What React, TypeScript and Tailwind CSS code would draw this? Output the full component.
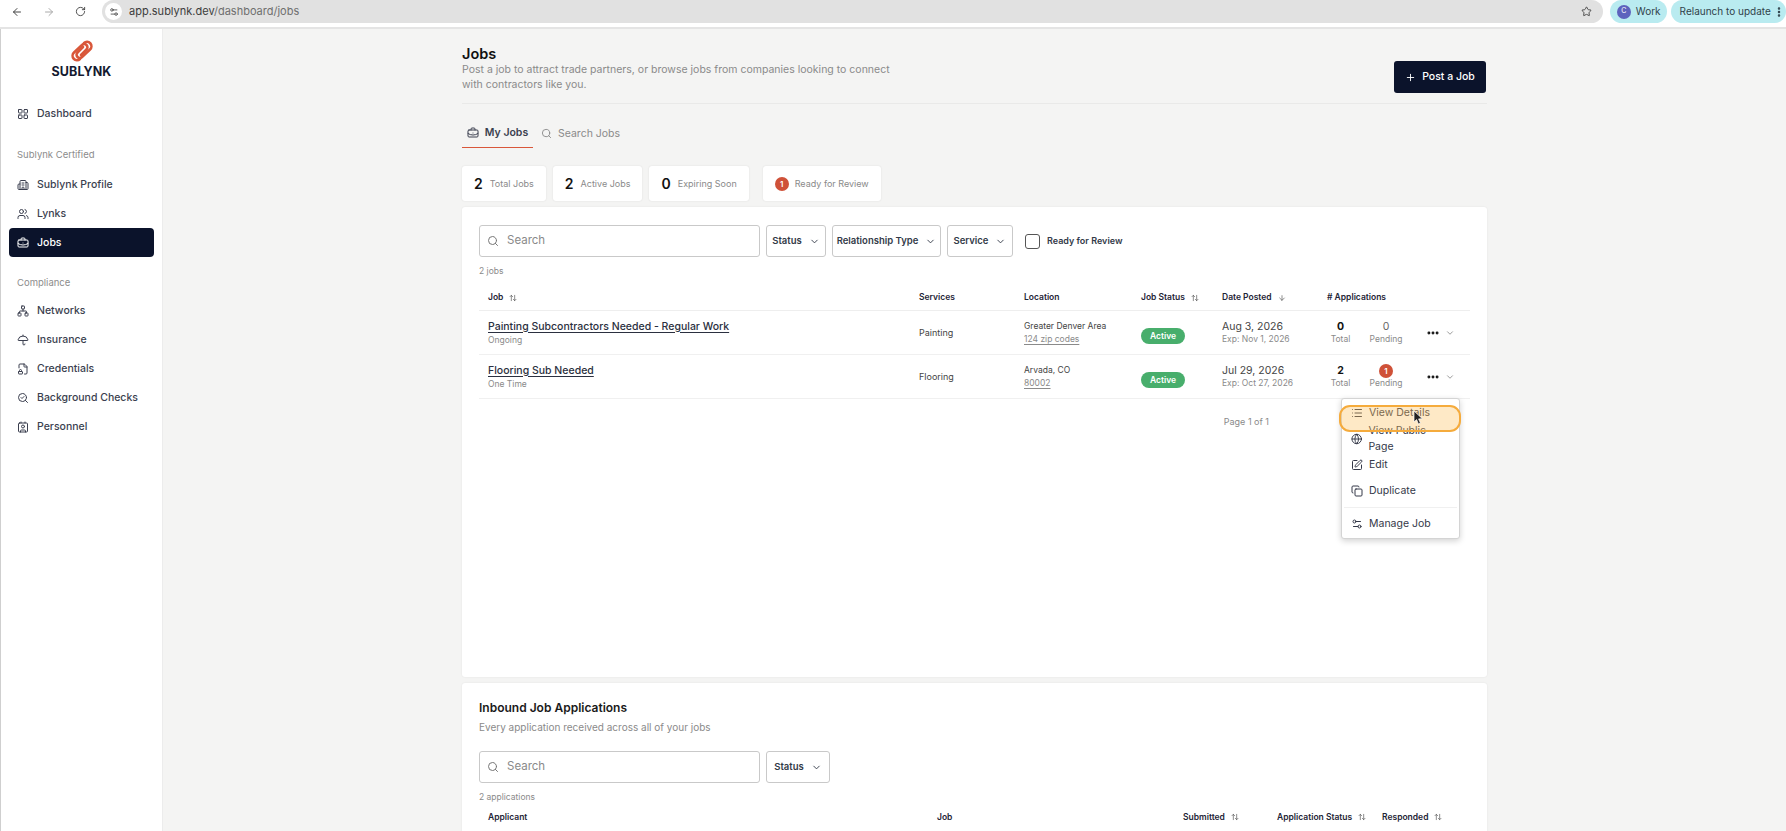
import {
  ArrowDown,
  ArrowLeft,
  ArrowRight,
  ArrowUpDown,
  BriefcaseBusiness,
  Building2,
  ChevronDown,
  Contact,
  Copy,
  EllipsisVertical,
  Ellipsis,
  FileLock2,
  Globe,
  LayoutGrid,
  List,
  Network,
  Plus,
  RotateCw,
  Search,
  SearchCheck,
  Settings2,
  SquarePen,
  Star,
  Umbrella,
  Users,
} from "lucide-react";
import type { ReactNode } from "react";

const gridCols = "grid grid-cols-[431px_105px_117px_81px_105px_45px_46px_60px]";

function NavItem({ icon, label, active }: { icon: ReactNode; label: string; active?: boolean }) {
  return (
    <div
      className={
        active
          ? "mx-[8px] flex h-[29px] items-center gap-[8px] rounded-[4px] bg-[#0b132b] px-[8px] text-white"
          : "mx-[8px] flex h-[29px] items-center gap-[8px] px-[8px] text-[#3b3f4f]"
      }
    >
      {icon}
      <span className="text-[10.5px] font-medium">{label}</span>
    </div>
  );
}

function Sidebar() {
  const ic = "h-[12px] w-[12px]";
  return (
    <aside className="flex w-[163px] shrink-0 flex-col border-r border-l border-r-[#ececec] border-l-[#cfcfcf] bg-white">
      <div className="flex flex-col items-center pt-[11px]">
        <svg width="26" height="22" viewBox="0 0 26 22" fill="none" stroke="#d9573a" strokeWidth="2.6" strokeLinecap="round">
          <path d="M12 15 L17.5 9.5 A3 3 0 0 0 13 5 L5 12.5 A4 4 0 0 0 11 19" />
          <path d="M14 7 L8.5 12.5 A3 3 0 0 0 13 17 L21 9.5 A4 4 0 0 0 15 3" />
        </svg>
        <div className="mt-[3px] text-[12.5px] leading-[14px] font-bold tracking-[0.1px] text-[#141a30]">SUBLYNK</div>
      </div>
      <div className="mt-[20px]">
        <NavItem icon={<LayoutGrid className={ic} />} label="Dashboard" />
      </div>
      <div className="mt-[20px] mb-[8px] px-[16px] text-[9.5px] text-[#8c8c8c]">Sublynk Certified</div>
      <NavItem icon={<Building2 className={ic} />} label="Sublynk Profile" />
      <NavItem icon={<Users className={ic} />} label="Lynks" />
      <NavItem icon={<BriefcaseBusiness className={ic} />} label="Jobs" active />
      <div className="mt-[19px] mb-[6px] px-[16px] text-[9.5px] text-[#8c8c8c]">Compliance</div>
      <NavItem icon={<Network className={ic} />} label="Networks" />
      <NavItem icon={<Umbrella className={ic} />} label="Insurance" />
      <NavItem icon={<FileLock2 className={ic} />} label="Credentials" />
      <NavItem icon={<SearchCheck className={ic} />} label="Background Checks" />
      <NavItem icon={<Contact className={ic} />} label="Personnel" />
    </aside>
  );
}

function BrowserBar() {
  return (
    <div className="flex h-[29px] shrink-0 items-start border-b-[2px] border-[#e4e4e4] bg-white pl-[11px]">
      <div className="flex h-[23px] items-center gap-[20px] text-[#444]">
        <ArrowLeft className="h-[12px] w-[12px]" />
        <ArrowRight className="h-[12px] w-[12px] text-[#aaa]" />
        <RotateCw className="h-[11px] w-[11px]" />
      </div>
      <div className="ml-[16px] flex h-[23px] w-[1509px] items-center rounded-r-full rounded-l-full bg-[#e1e1e1] pr-[11px] pl-[3px]">
        <div className="flex h-[17px] w-[17px] items-center justify-center rounded-full bg-white">
          <Settings2 className="h-[10px] w-[10px] text-[#444]" />
        </div>
        <div className="ml-[7px] flex-1 text-[11px] text-[#3c3c3c]">
          app.sublynk.dev<span className="text-[#6f6f6f]">/dashboard/jobs</span>
        </div>
        <Star className="h-[11px] w-[11px] text-[#444]" />
      </div>
      <div className="ml-[7px] flex h-[23px] w-[57px] items-center rounded-full bg-[#b9ebf0] pl-[7px]">
        <div className="flex h-[14px] w-[14px] items-center justify-center rounded-full bg-[#5d62bd] text-[7px] text-white">C</div>
        <span className="ml-[5px] text-[10px] text-[#30424a]">Work</span>
      </div>
      <div className="ml-[4px] flex h-[23px] w-[116px] items-center rounded-full bg-[#b9ebf0] pl-[9px] text-[10px] text-[#30424a]">
        Relaunch to update
        <EllipsisVertical className="ml-[2px] h-[12px] w-[12px]" strokeWidth={3} />
      </div>
    </div>
  );
}

function Stat({ value, label }: { value: string; label: string }) {
  return (
    <div className="flex h-[35px] items-center gap-[7px] rounded-[3px] bg-white px-[12px] shadow-[0_0_2px_rgba(0,0,0,0.1)]">
      <span className="text-[14px] font-semibold text-[#111]">{value}</span>
      <span className="text-[9px] text-[#8a8a8a]">{label}</span>
    </div>
  );
}

function FilterSelect({ label, width }: { label: string; width: string }) {
  return (
    <div className={`flex h-[32px] items-center justify-center gap-[7px] rounded-[3px] border border-[#c9c9c9] bg-white ${width}`}>
      <span className="text-[9.5px] font-semibold text-[#333a48]">{label}</span>
      <ChevronDown className="h-[11px] w-[11px] text-[#333a48]" />
    </div>
  );
}

function SearchBox() {
  return (
    <div className="flex h-[32px] w-[281px] items-center gap-[8px] rounded-[3px] border border-[#c9c9c9] bg-white px-[7px]">
      <Search className="h-[12px] w-[12px] text-[#777]" />
      <span className="text-[11.5px] text-[#8a8a8a]">Search</span>
    </div>
  );
}

function HeadCell({ label, sort }: { label: string; sort?: "both" | "down" }) {
  return (
    <div className="flex items-center gap-[6px] pl-[9px] text-[8.5px] font-semibold whitespace-nowrap text-[#1e2436]">
      {label}
      {sort === "both" && <ArrowUpDown className="h-[8px] w-[8px] text-[#555]" />}
      {sort === "down" && <ArrowDown className="h-[8px] w-[8px] text-[#555]" />}
    </div>
  );
}

type Job = {
  title: string;
  kind: string;
  service: string;
  place: string;
  area: string;
  posted: string;
  expires: string;
  total: string;
  pending: string;
  badge?: boolean;
};

const jobs: Job[] = [
  {
    title: "Painting Subcontractors Needed - Regular Work",
    kind: "Ongoing",
    service: "Painting",
    place: "Greater Denver Area",
    area: "124 zip codes",
    posted: "Aug 3, 2026",
    expires: "Exp: Nov 1, 2026",
    total: "0",
    pending: "0",
  },
  {
    title: "Flooring Sub Needed",
    kind: "One Time",
    service: "Flooring",
    place: "Arvada, CO",
    area: "80002",
    posted: "Jul 29, 2026",
    expires: "Exp: Oct 27, 2026",
    total: "2",
    pending: "1",
    badge: true,
  },
];

function JobRow({ job }: { job: Job }) {
  return (
    <div className={`${gridCols} h-[44px] items-center border-b border-[#f0f0f0] last:border-b-0`}>
      <div className="pl-[9px]">
        <div className="text-[10.5px] leading-[13px] font-medium text-[#2b3040] underline underline-offset-2">{job.title}</div>
        <div className="mt-[1px] text-[8.5px] leading-[12px] text-[#8a8a8a]">{job.kind}</div>
      </div>
      <div className="pl-[9px] text-[9px] text-[#444]">{job.service}</div>
      <div className="pl-[9px]">
        <div className="text-[8.5px] leading-[13px] text-[#444]">{job.place}</div>
        <div className="text-[8.5px] leading-[13px] text-[#8a8a8a] underline underline-offset-2">{job.area}</div>
      </div>
      <div className="pl-[9px]">
        <span className="inline-flex h-[16px] w-[44px] items-center justify-center rounded-full bg-[#48ae6c] text-[8.5px] font-semibold text-white">Active</span>
      </div>
      <div className="pl-[9px]">
        <div className="text-[10.5px] leading-[14px] text-[#444]">{job.posted}</div>
        <div className="text-[8.5px] leading-[11px] text-[#8a8a8a]">{job.expires}</div>
      </div>
      <div className="text-center">
        <div className="text-[10.5px] leading-[14px] font-bold text-[#111]">{job.total}</div>
        <div className="text-[8.5px] leading-[11px] text-[#8a8a8a]">Total</div>
      </div>
      <div className="flex flex-col items-center">
        {job.badge ? (
          <div className="flex h-[14px] w-[14px] items-center justify-center rounded-full bg-[#cf5138] text-[8px] font-semibold text-white">{job.pending}</div>
        ) : (
          <div className="text-[10.5px] leading-[14px] text-[#666]">{job.pending}</div>
        )}
        <div className="text-[8.5px] leading-[11px] text-[#8a8a8a]">Pending</div>
      </div>
      <div className="flex items-center pl-[17px]">
        <Ellipsis className="h-[14px] w-[14px] text-[#111]" strokeWidth={3} />
        <ChevronDown className="ml-[5px] h-[10px] w-[10px] text-[#888]" />
      </div>
    </div>
  );
}

function MenuItem({ icon, label }: { icon: ReactNode; label: string }) {
  return (
    <div className="flex h-[26px] items-center gap-[6px] px-[9px] text-[10.5px] text-[#343848]">
      {icon}
      {label}
    </div>
  );
}

function ActionMenu() {
  const ic = "h-[12px] w-[12px]";
  return (
    <div className="absolute top-[-1px] left-[862px] z-10 w-[119px] rounded-[3px] border border-[#d4d4d4] bg-white py-[1px] shadow-[0_2px_6px_rgba(0,0,0,0.18)]">
      <MenuItem icon={<List className={ic} />} label="View Details" />
      <MenuItem icon={<Globe className={ic} />} label="View Public Page" />
      <MenuItem icon={<SquarePen className={ic} />} label="Edit" />
      <MenuItem icon={<Copy className={ic} />} label="Duplicate" />
      <div className="mx-[2px] mt-[3px] border-t border-[#f0f0f0] pt-[3px]">
        <div className="-mx-[2px]">
          <MenuItem icon={<Settings2 className={ic} />} label="Manage Job" />
        </div>
      </div>
      {/* highlight drawn over the first row */}
      <div className="absolute top-[6px] left-[-3px] h-[27px] w-[122px] rounded-[11px] border-[2px] border-[#f5ab3c] bg-[#fbbf5c]/35" />
      <svg className="absolute top-[11px] left-[71px]" width="11" height="15" viewBox="0 0 11 15">
        <path d="M1 1 L1 12 L3.6 9.6 L5.4 14 L7.4 13 L5.6 8.9 L9.4 8.7 Z" fill="#222" stroke="#fff" strokeWidth="0.7" />
      </svg>
    </div>
  );
}

export default function App() {
  return (
    <div className="flex h-screen flex-col overflow-hidden bg-[#f4f4f3] font-['Inter',sans-serif]">
      <BrowserBar />
      <div className="flex min-h-0 flex-1">
        <Sidebar />
        <main className="min-w-0 flex-1 overflow-hidden">
          <div className="mx-auto w-[1025px] pt-[15px]">
            <div className="flex items-start justify-between border-b border-[#e9e9e8] pb-[10px]">
              <div>
                <h1 className="text-[14.5px] leading-[19px] font-semibold text-[#111]">Jobs</h1>
                <p className="w-[440px] text-[10.5px] leading-[14.5px] text-[#8a8a8a]">
                  Post a job to attract trade partners, or browse jobs from companies looking to connect with contractors like you.
                </p>
              </div>
              <button className="mt-[17px] mr-[1px] flex h-[32px] w-[92px] items-center justify-center gap-[6px] rounded-[3px] bg-[#0b132b] text-[10.5px] font-medium text-white">
                <Plus className="h-[11px] w-[11px]" />
                Post a Job
              </button>
            </div>

            <div className="mt-[15px] flex items-center">
              <div className="flex h-[29px] w-[71px] items-center justify-center gap-[6px] border-b border-[#d9573a] text-[10.5px] font-semibold text-[#3b3f4f]">
                <BriefcaseBusiness className="h-[12px] w-[12px]" />
                My Jobs
              </div>
              <div className="ml-[8px] flex h-[29px] items-center gap-[6px] text-[10.5px] text-[#8a8a8a]">
                <Search className="h-[11px] w-[11px]" />
                Search Jobs
              </div>
            </div>

            <div className="mt-[18px] flex items-center gap-[7px]">
              <Stat value="2" label="Total Jobs" />
              <Stat value="2" label="Active Jobs" />
              <Stat value="0" label="Expiring Soon" />
              <div className="ml-[7px] flex h-[35px] items-center gap-[6px] rounded-[3px] bg-white px-[12px] shadow-[0_0_2px_rgba(0,0,0,0.1)]">
                <div className="flex h-[14px] w-[14px] items-center justify-center rounded-full bg-[#cf5138] text-[8px] font-semibold text-white">1</div>
                <span className="text-[9px] text-[#8a8a8a]">Ready for Review</span>
              </div>
            </div>

            <section className="mt-[6px] h-[470px] rounded-[3px] bg-white px-[17px] pt-[18px] shadow-[0_0_2px_rgba(0,0,0,0.08)]">
              <div className="flex items-center gap-[6px]">
                <SearchBox />
                <FilterSelect label="Status" width="w-[60px]" />
                <FilterSelect label="Relationship Type" width="w-[109px]" />
                <FilterSelect label="Service" width="w-[66px]" />
                <div className="ml-[6px] flex items-center gap-[7px]">
                  <div className="h-[15px] w-[15px] rounded-[3px] border border-[#555]" />
                  <span className="text-[9px] font-semibold text-[#333a48]">Ready for Review</span>
                </div>
              </div>
              <div className="mt-[8px] text-[8.5px] leading-[12px] text-[#8a8a8a]">2 jobs</div>
              <div className={`${gridCols} mt-[8px] h-[26px] items-center border-b border-[#eeeeee]`}>
                <HeadCell label="Job" sort="both" />
                <HeadCell label="Services" />
                <HeadCell label="Location" />
                <HeadCell label="Job Status" sort="both" />
                <HeadCell label="Date Posted" sort="down" />
                <HeadCell label="# Applications" sort="both" />
              </div>
              {jobs.map((job) => (
                <JobRow key={job.title} job={job} />
              ))}
              <div className="relative">
                <div className="pt-[16px] pr-[201px] text-right text-[9px] text-[#8a8a8a]">Page 1 of 1</div>
                <ActionMenu />
              </div>
            </section>

            <section className="mt-[6px] h-[300px] rounded-[3px] bg-white px-[17px] pt-[17px] shadow-[0_0_2px_rgba(0,0,0,0.08)]">
              <h2 className="text-[12px] leading-[16px] font-semibold text-[#1a1a1a]">Inbound Job Applications</h2>
              <p className="mt-[4px] text-[10px] leading-[14px] text-[#8a8a8a]">Every application received across all of your jobs</p>
              <div className="mt-[17px] flex items-center gap-[6px]">
                <SearchBox />
                <FilterSelect label="Status" width="w-[64px]" />
              </div>
              <div className="mt-[8px] text-[8.5px] leading-[12px] text-[#8a8a8a]">2 applications</div>
              <div className="mt-[8px] grid grid-cols-[449px_246px_94px_105px_1fr] items-center">
                <HeadCell label="Applicant" />
                <HeadCell label="Job" />
                <HeadCell label="Submitted" sort="both" />
                <HeadCell label="Application Status" sort="both" />
                <HeadCell label="Responded" sort="both" />
              </div>
            </section>
          </div>
        </main>
      </div>
    </div>
  );
}
